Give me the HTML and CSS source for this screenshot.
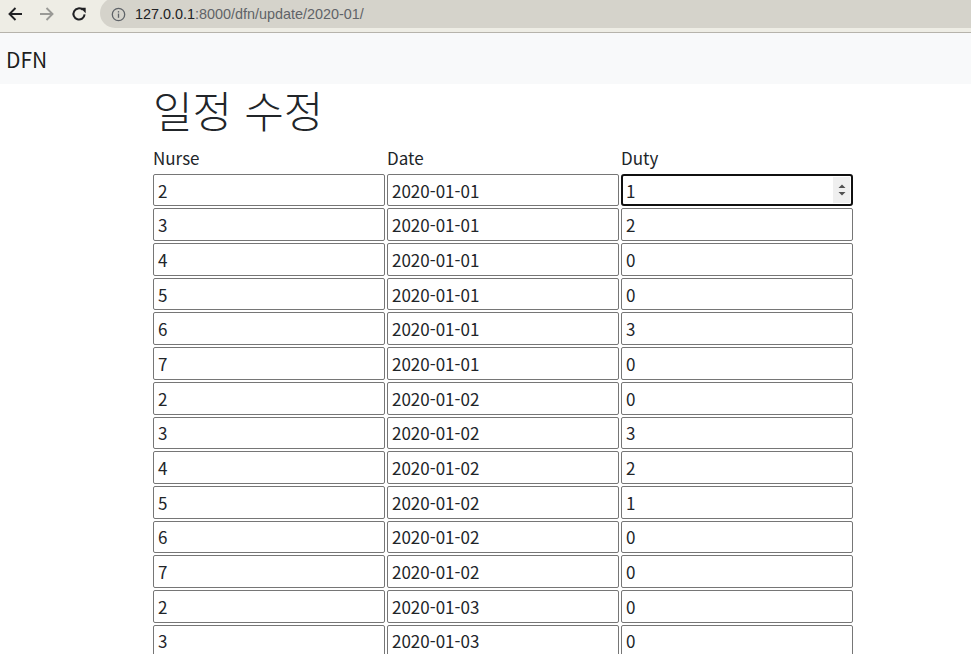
FILE: index.html
```html
<!DOCTYPE html>
<html lang="ko">
<head>
<meta charset="utf-8">
<title>DFN</title>
<link rel="stylesheet" href="styles.css">
</head>
<body>
<div class="chrome">
  <div class="navbtns">
    <svg class="navicon" viewBox="0 0 16 16" width="16" height="16"><path d="M15 8H2.5M8.5 2L2.5 8l6 6" fill="none" stroke="#202124" stroke-width="1.9"/></svg>
    <svg class="navicon" viewBox="0 0 16 16" width="16" height="16"><path d="M1 8h12.5M7.5 2l6 6-6 6" fill="none" stroke="#9a9a96" stroke-width="1.9"/></svg>
    <svg class="navicon" viewBox="0 0 16 16" width="16" height="16"><path d="M13.6 8.4a5.6 5.6 0 1 1-1.8-4.6" fill="none" stroke="#202124" stroke-width="2"/><path d="M9.3 1.8h5.4v5.4z" fill="#202124"/></svg>
  </div>
  <div class="omnibox">
    <svg class="info" viewBox="0 0 16 16" width="15" height="15"><circle cx="8" cy="8" r="6.6" fill="none" stroke="#5f6368" stroke-width="1.4"/><rect x="7.3" y="7" width="1.4" height="4.5" fill="#5f6368"/><rect x="7.3" y="4.4" width="1.4" height="1.5" fill="#5f6368"/></svg>
    <span class="host">127.0.0.1</span><span class="path">:8000/dfn/update/2020-01/</span>
  </div>
</div>
<nav class="navbar"><span class="brand">DFN</span></nav>
<main class="container">
  <h1 class="title">일정 수정</h1>
  <div class="grid">
    <div class="label">Nurse</div><div class="label">Date</div><div class="label">Duty</div>
    <div class="field">2</div><div class="field">2020-01-01</div><div class="field focus">1<span class="spin"><svg viewBox="0 0 8 16" width="8" height="16"><path d="M0.5 6l3.5-3.5 3.5 3.5z" fill="#505050"/><path d="M0.5 10l3.5 3.5 3.5-3.5z" fill="#505050"/></svg></span></div>
    <div class="field">3</div><div class="field">2020-01-01</div><div class="field">2</div>
    <div class="field">4</div><div class="field">2020-01-01</div><div class="field">0</div>
    <div class="field">5</div><div class="field">2020-01-01</div><div class="field">0</div>
    <div class="field">6</div><div class="field">2020-01-01</div><div class="field">3</div>
    <div class="field">7</div><div class="field">2020-01-01</div><div class="field">0</div>
    <div class="field">2</div><div class="field">2020-01-02</div><div class="field">0</div>
    <div class="field">3</div><div class="field">2020-01-02</div><div class="field">3</div>
    <div class="field">4</div><div class="field">2020-01-02</div><div class="field">2</div>
    <div class="field">5</div><div class="field">2020-01-02</div><div class="field">1</div>
    <div class="field">6</div><div class="field">2020-01-02</div><div class="field">0</div>
    <div class="field">7</div><div class="field">2020-01-02</div><div class="field">0</div>
    <div class="field">2</div><div class="field">2020-01-03</div><div class="field">0</div>
    <div class="field">3</div><div class="field">2020-01-03</div><div class="field">0</div>
  </div>
</main>
</body>
</html>
```
FILE: styles.css
```css
html, body {
  margin: 0;
  padding: 0;
  background: #ffffff;
  overflow: hidden;
  height: 654px;
}
body {
  font-family: "Noto Sans CJK KR", "Noto Sans", sans-serif;
  color: #212529;
}
.chrome {
  height: 32px;
  background: #eeede5;
  border-bottom: 1px solid #b6b3ab;
  display: flex;
  align-items: flex-start;
  overflow: hidden;
}
.navbtns {
  display: flex;
  align-items: center;
  height: 28px;
  padding-left: 7px;
  gap: 16px;
  width: 93px;
}
.omnibox {
  flex: 1;
  height: 30px;
  margin-top: -2px;
  background: #d5d3cb;
  border-radius: 15px 0 0 15px;
  display: flex;
  align-items: center;
  padding-left: 11px;
  padding-top: 2px;
  box-sizing: border-box;
  font-family: "Liberation Sans", "Noto Sans", sans-serif;
  font-size: 14.4px;
}
.info { margin-right: 9px; }
.host { color: #202124; }
.path { color: #5f6368; }
.navbar {
  height: 51px;
  background: #f8f9fa;
  display: flex;
  align-items: center;
  padding-left: 6px;
}
.brand {
  font-size: 21px;
  color: rgba(0,0,0,0.9);
}
.container {
  width: 700px;
  margin-left: 153px;
}
.title {
  margin: 0;
  padding-top: 0;
  font-size: 43px;
  font-weight: 300;
  line-height: 50px;
  height: 55px;
}
.grid {
  display: grid;
  grid-template-columns: 232px 232px 232px;
  column-gap: 2px;
  row-gap: 2px;
  grid-auto-rows: 32.7px;
}
.label {
  font-size: 17px;
  align-self: end;
  line-height: 24px;
  padding-bottom: 2px;
}
.field {
  box-sizing: border-box;
  border: 1px solid #767676;
  border-radius: 2px;
  font-size: 17px;
  padding-left: 4px;
  display: flex;
  align-items: center;
  position: relative;
}
.field.focus {
  border: 2px solid #101010;
  border-radius: 3px;
  padding-left: 3px;
}
.spin {
  position: absolute;
  right: 1px;
  top: 1px;
  bottom: 1px;
  width: 17px;
  background: #efefef;
  display: flex;
  align-items: center;
  justify-content: center;
}
```
